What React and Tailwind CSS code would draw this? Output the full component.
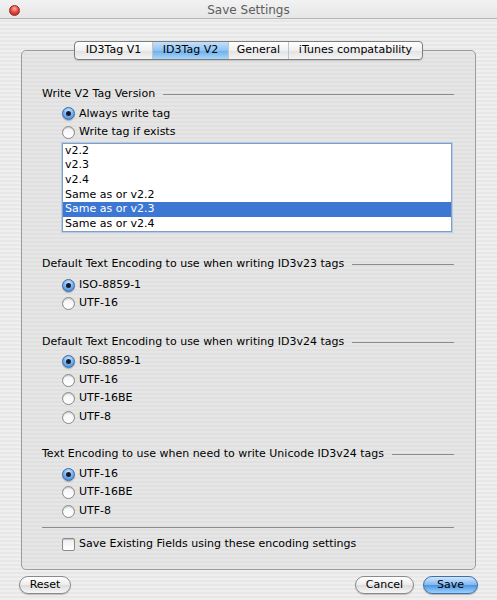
import { useState } from "react";

const font = { fontFamily: '"DejaVu Sans", "Liberation Sans", sans-serif' };

let Radio = ({ on, label, onClick }) => (
    <div className="flex items-center h-[18.5px] gap-[4px] cursor-default" onClick={onClick}>
        {on ? (
            <span className="w-[13px] h-[13px] rounded-full border border-[#3b6aa8] bg-[radial-gradient(circle_at_50%_30%,#d6ebff_0%,#7db5f0_45%,#3a7fd6_100%)] flex items-center justify-center shadow-[0_1px_1px_rgba(0,0,0,0.25)]">
                <span className="w-[5px] h-[5px] rounded-full bg-[#1a1a2e]"></span>
            </span>
        ) : (
            <span className="w-[13px] h-[13px] rounded-full border border-[#8a8a8a] bg-[linear-gradient(#f4f4f4,#ffffff)] shadow-[inset_0_1px_1px_rgba(0,0,0,0.2)]"></span>
        )}
        <span className="text-[11px] text-black">{label}</span>
    </div>
);

let Heading = ({ text, mt }) => (
    <div className={`flex items-center gap-[8px] pr-[21px] ${mt}`}>
        <span className="text-[11px] text-black whitespace-nowrap">{text}</span>
        <span className="flex-1 h-px bg-[#8c8c8c]"></span>
    </div>
);

let App = () => {
    const [always, setAlways] = useState(true);
    const [version, setVersion] = useState(4);
    const [enc23, setEnc23] = useState(0);
    const [enc24, setEnc24] = useState(0);
    const [uni, setUni] = useState(0);
    const [keep, setKeep] = useState(false);

    const versions = ["v2.2", "v2.3", "v2.4", "Same as or v2.2", "Same as or v2.3", "Same as or v2.4"];
    const tabs = ["ID3Tag V1", "ID3Tag V2", "General", "iTunes compatability"];
    const tabWidths = ["w-[77px]", "w-[76px]", "w-[60px]", "w-[134px]"];

    return (
        <div style={font} className="w-[497px] h-[600px] overflow-hidden bg-[repeating-linear-gradient(0deg,#efefef_0px,#efefef_2px,#e7e7e7_2px,#e7e7e7_4px)] flex flex-col">
            {/* title bar */}
            <div className="h-[19px] pt-[2px] flex items-center border-b border-[#b4b4b4] bg-[linear-gradient(#f2f2f2,#e6e6e6)]">
                <div className="w-[30px] pl-[9px] flex items-center">
                    <span className="w-[11px] h-[11px] rounded-full border border-[#8e2a2a] bg-[radial-gradient(circle_at_50%_30%,#ffb0a8_0%,#e8453c_50%,#a8201a_100%)]"></span>
                </div>
                <div className="flex-1 text-center text-[12px] text-[#5c5c5c]">Save Settings</div>
                <div className="w-[30px]"></div>
            </div>

            {/* tab panel */}
            <div className="mt-[31px] mx-[21px] h-[520px] border border-[#9c9c9c] rounded-[5px] bg-[repeating-linear-gradient(0deg,#e6e6e6_0px,#e6e6e6_2px,#e0e0e0_2px,#e0e0e0_4px)] flex flex-col">
                <div className="-mt-[10px] flex justify-center">
                    <div className="flex h-[19px] border border-[#7d7d7d] rounded-[4px] overflow-hidden bg-[linear-gradient(#ffffff,#f0f0f0_50%,#e2e2e2_51%,#f4f4f4)] shadow-[0_1px_1px_rgba(0,0,0,0.15)]">
                        {tabs.map((t, i) => (
                            <div
                                key={t}
                                className={`${tabWidths[i]} flex items-center justify-center text-[11px] text-black ${i > 0 ? "border-l border-[#c4c4c4]" : ""} ${i === 1 ? "bg-[linear-gradient(#c4e0fb,#8fc2f2_50%,#6aaee9_51%,#a8d6fb)]" : ""}`}
                            >
                                {t}
                            </div>
                        ))}
                    </div>
                </div>

                <div className="pl-[20px] flex flex-col">
                    <Heading text="Write V2 Tag Version" mt="mt-[26px]" />
                    <div className="pl-[20px] mt-[2px]">
                        <Radio on={always} label="Always write tag" onClick={() => setAlways(true)} />
                        <Radio on={!always} label="Write tag if exists" onClick={() => setAlways(false)} />
                    </div>
                    <div className="ml-[20px] mr-[23px] mt-[1px] border border-[#7f9fc8] bg-white shadow-[0_0_0_1px_#b6cbe6]">
                        {versions.map((v, i) => (
                            <div
                                key={v}
                                onClick={() => setVersion(i)}
                                className={`h-[14.67px] flex items-center pl-[2px] text-[11px] ${version === i ? "bg-[#3c77d4] text-white" : "text-black"}`}
                            >
                                {v}
                            </div>
                        ))}
                    </div>

                    <Heading text="Default Text Encoding to use when writing ID3v23 tags" mt="mt-[24px]" />
                    <div className="pl-[20px] mt-[3px]">
                        <Radio on={enc23 === 0} label="ISO-8859-1" onClick={() => setEnc23(0)} />
                        <Radio on={enc23 === 1} label="UTF-16" onClick={() => setEnc23(1)} />
                    </div>

                    <Heading text="Default Text Encoding to use when writing ID3v24 tags" mt="mt-[21px]" />
                    <div className="pl-[20px] mt-[2px]">
                        {["ISO-8859-1", "UTF-16", "UTF-16BE", "UTF-8"].map((e, i) => (
                            <Radio key={e} on={enc24 === i} label={e} onClick={() => setEnc24(i)} />
                        ))}
                    </div>

                    <Heading text="Text Encoding to use when need to write Unicode ID3v24 tags" mt="mt-[20px]" />
                    <div className="pl-[20px] mt-[2px]">
                        {["UTF-16", "UTF-16BE", "UTF-8"].map((e, i) => (
                            <Radio key={e} on={uni === i} label={e} onClick={() => setUni(i)} />
                        ))}
                    </div>

                    <div className="mt-[7px] mr-[21px] h-px bg-[#8c8c8c]"></div>

                    <div className="pl-[20px] mt-[8px] flex items-center gap-[4px]" onClick={() => setKeep(!keep)}>
                        <span className="w-[13px] h-[13px] rounded-[2px] border border-[#8a8a8a] bg-[linear-gradient(#f0f0f0,#ffffff)] shadow-[inset_0_1px_1px_rgba(0,0,0,0.2)] flex items-center justify-center text-[10px] leading-none">
                            {keep ? "✓" : ""}
                        </span>
                        <span className="text-[11px] text-black">Save Existing Fields using these encoding settings</span>
                    </div>
                </div>
            </div>

            {/* buttons */}
            <div className="mt-[6px] px-[19px] flex items-center">
                <button className="w-[52px] h-[18px] rounded-full border border-[#8a8a8a] bg-[linear-gradient(#ffffff,#ececec_50%,#dcdcdc_51%,#f6f6f6)] text-[11px] text-black shadow-[0_1px_1px_rgba(0,0,0,0.2)]">
                    Reset
                </button>
                <div className="flex-1"></div>
                <button className="w-[59px] h-[18px] rounded-full border border-[#8a8a8a] bg-[linear-gradient(#ffffff,#ececec_50%,#dcdcdc_51%,#f6f6f6)] text-[11px] text-black shadow-[0_1px_1px_rgba(0,0,0,0.2)]">
                    Cancel
                </button>
                <button className="ml-[9px] w-[55px] h-[18px] rounded-full border border-[#3f6fa8] bg-[linear-gradient(#cfe6fc,#7fb7f0_50%,#4a94e2_51%,#9fd0fb)] text-[11px] text-black shadow-[0_1px_1px_rgba(0,0,0,0.25)]">
                    Save
                </button>
            </div>
        </div>
    );
};

export default App
